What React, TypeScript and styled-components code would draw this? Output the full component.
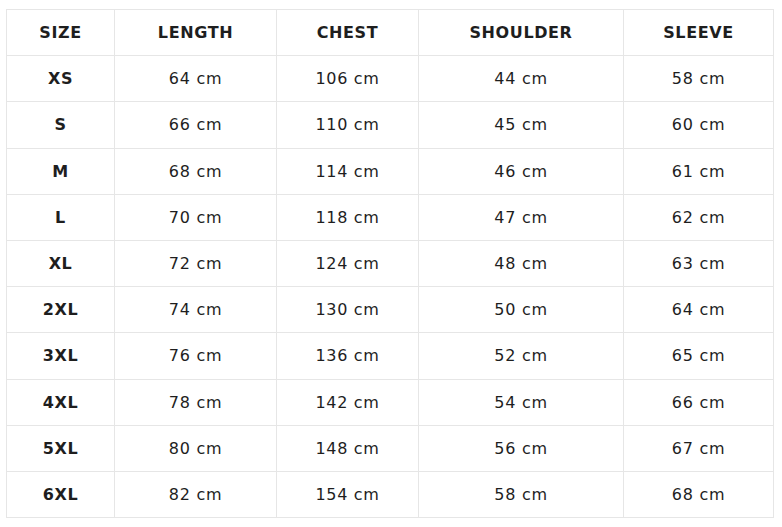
import React from "react";
import styled, { createGlobalStyle } from "styled-components";

const GlobalStyle = createGlobalStyle`
  html, body {
    margin: 0;
    padding: 0;
    background: #ffffff;
  }
  body {
    font-family: "DejaVu Sans", "Open Sans", sans-serif;
    color: #1e1e1e;
  }
`;

const COLUMNS = [
  { label: "SIZE", width: 107 },
  { label: "LENGTH", width: 161 },
  { label: "CHEST", width: 141 },
  { label: "SHOULDER", width: 204 },
  { label: "SLEEVE", width: 149 },
];

const ROWS: [string, number, number, number, number][] = [
  ["XS", 64, 106, 44, 58],
  ["S", 66, 110, 45, 60],
  ["M", 68, 114, 46, 61],
  ["L", 70, 118, 47, 62],
  ["XL", 72, 124, 48, 63],
  ["2XL", 74, 130, 50, 64],
  ["3XL", 76, 136, 52, 65],
  ["4XL", 78, 142, 54, 66],
  ["5XL", 80, 148, 56, 67],
  ["6XL", 82, 154, 58, 68],
];

const Wrapper = styled.div`
  padding: 9px 0 0 6px;
`;

const Table = styled.table`
  border-collapse: collapse;
  table-layout: fixed;
  width: 767px;
`;

const HeadCell = styled.th<{ $width: number }>`
  width: ${(p) => p.$width}px;
  height: 45.2px;
  padding: 0;
  border: 1px solid #e6e6e6;
  font-size: 16px;
  font-weight: 700;
  letter-spacing: 0.6px;
  text-align: center;
  vertical-align: middle;
`;

const Cell = styled.td<{ $bold?: boolean }>`
  height: 45.2px;
  padding: 0;
  border: 1px solid #e6e6e6;
  font-size: 16px;
  font-weight: ${(p) => (p.$bold ? 700 : 400)};
  letter-spacing: ${(p) => (p.$bold ? "0.6px" : "0.7px")};
  text-align: center;
  vertical-align: middle;
`;

const App = () => {
  return (
    <>
      <GlobalStyle />
      <Wrapper>
        <Table>
          <thead>
            <tr>
              {COLUMNS.map((col) => (
                <HeadCell key={col.label} $width={col.width}>
                  {col.label}
                </HeadCell>
              ))}
            </tr>
          </thead>
          <tbody>
            {ROWS.map(([size, ...values]) => (
              <tr key={size}>
                <Cell $bold={true}>{size}</Cell>
                {values.map((value, index) => (
                  <Cell key={index}>{value} cm</Cell>
                ))}
              </tr>
            ))}
          </tbody>
        </Table>
      </Wrapper>
    </>
  );
};

export default App;
